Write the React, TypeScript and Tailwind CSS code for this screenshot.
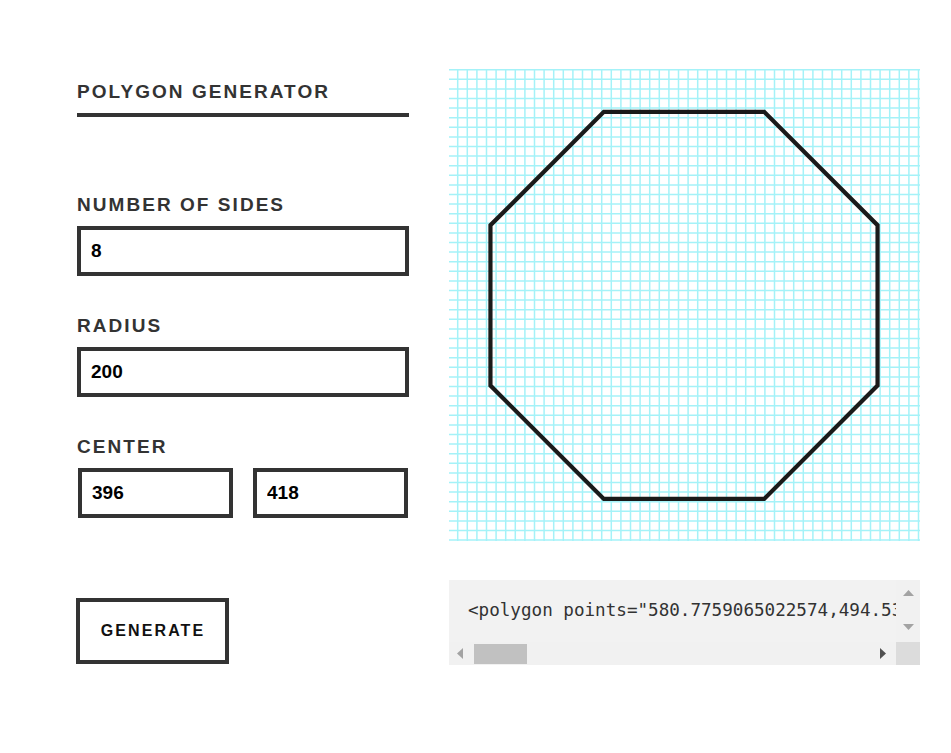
import React from "react";

const GRID_W = 471;
const GRID_H = 472;
const STEP = 9.6;

function Grid() {
  const vx: number[] = [];
  for (let x = 8.7 - STEP; x < GRID_W + 1; x += STEP) vx.push(x);
  const hy: number[] = [];
  for (let y = 0.7; y < GRID_H + 1; y += STEP) hy.push(y);
  const cx = 235;
  const cy = 236.4;
  const r = 209.5;
  const pts: string[] = [];
  for (let k = 0; k < 8; k++) {
    const a = ((22.5 + 45 * k) * Math.PI) / 180;
    pts.push(`${(cx + r * Math.cos(a)).toFixed(2)},${(cy + r * Math.sin(a)).toFixed(2)}`);
  }
  return (
    <svg width={GRID_W} height={GRID_H} viewBox={`0 0 ${GRID_W} ${GRID_H}`} className="block">
      {vx.map((x, i) => (
        <line key={`v${i}`} x1={x} y1={0} x2={x} y2={GRID_H} stroke="#a4f2f8" strokeWidth={1.5} />
      ))}
      {hy.map((y, i) => (
        <line key={`h${i}`} x1={0} y1={y} x2={GRID_W} y2={y} stroke="#a4f2f8" strokeWidth={1.5} />
      ))}
      <polygon points={pts.join(" ")} fill="none" stroke="#1a1a1a" strokeWidth={4.2} strokeLinejoin="miter" />
    </svg>
  );
}

const labelCls =
  "text-[19px] leading-[23px] font-bold tracking-[2.05px] text-[#333333] uppercase";
const inputCls =
  "block h-[50px] border-[4px] border-[#333333] bg-white pl-[10px] text-[19px] font-bold text-black outline-none";

export default function App() {
  return (
    <div
      className="min-h-[753px] bg-white"
      style={{ fontFamily: '"Liberation Sans", Arial, sans-serif' }}
    >
      <div className="flex pl-[77px] pt-[69px]">
        {/* Left column */}
        <div className="w-[332px] shrink-0 pt-[10.5px]">
          <div className={labelCls}>Polygon Generator</div>
          <div className="mt-[10.5px] h-[4px] w-[332px] bg-[#333333]" />

          <div className={`${labelCls} mt-[75.5px]`}>Number of sides</div>
          <input readOnly defaultValue="8" className={`${inputCls} mt-[10.5px] w-[332px]`} />

          <div className={`${labelCls} mt-[37.5px]`}>Radius</div>
          <input readOnly defaultValue="200" className={`${inputCls} mt-[10.5px] w-[332px]`} />

          <div className={`${labelCls} mt-[37.5px]`}>Center</div>
          <div className="mt-[10.5px] flex gap-[20px] pl-[1px]">
            <input readOnly defaultValue="396" className={`${inputCls} w-[155px]`} />
            <input readOnly defaultValue="418" className={`${inputCls} w-[155px]`} />
          </div>

          <button className="mt-[80px] flex h-[66px] w-[153px] items-center justify-center border-[4px] border-[#333333] bg-white pl-[1px] text-[16px] font-bold tracking-[2.1px] text-[#111111] -ml-[1px]">
            GENERATE
          </button>
        </div>

        {/* Right column */}
        <div className="ml-[40px] flex w-[471px] shrink-0 flex-col">
          <Grid />
          <div className="mt-[39px] flex h-[85px] flex-col bg-[#f2f2f2]">
            <div className="flex h-[62px]">
              <div
                className="flex min-w-0 flex-1 items-center overflow-hidden whitespace-nowrap pl-[19px] pb-[1px] text-[17.6px] text-[#333333]"
                style={{ fontFamily: '"DejaVu Sans Mono", "Liberation Mono", monospace' }}
              >
                <span className="block overflow-hidden whitespace-nowrap w-[428px]">
                  {'<polygon points="580.7759065022574,494.5366864730179'}
                </span>
              </div>
              <div className="flex w-[24px] flex-col items-center bg-[#f1f1f1] pt-[10px] pb-[12px]">
                <svg width="11" height="6" viewBox="0 0 11 6">
                  <polygon points="5.5,0 11,6 0,6" fill="#a3a3a3" />
                </svg>
                <div className="flex-1" />
                <svg width="11" height="6" viewBox="0 0 11 6">
                  <polygon points="0,0 11,0 5.5,6" fill="#a3a3a3" />
                </svg>
              </div>
            </div>
            <div className="flex h-[23px]">
              <div className="flex flex-1 items-center bg-[#f1f1f1] pl-[8px] pr-[10px]">
                <svg width="6" height="11" viewBox="0 0 6 11">
                  <polygon points="6,0 6,11 0,5.5" fill="#a3a3a3" />
                </svg>
                <div className="ml-[11px] h-[20px] w-[53px] bg-[#c1c1c1]" />
                <div className="flex-1" />
                <svg width="6" height="11" viewBox="0 0 6 11">
                  <polygon points="0,0 6,5.5 0,11" fill="#505050" />
                </svg>
              </div>
              <div className="w-[24px] bg-[#dcdcdc]" />
            </div>
          </div>
        </div>
      </div>
    </div>
  );
}
